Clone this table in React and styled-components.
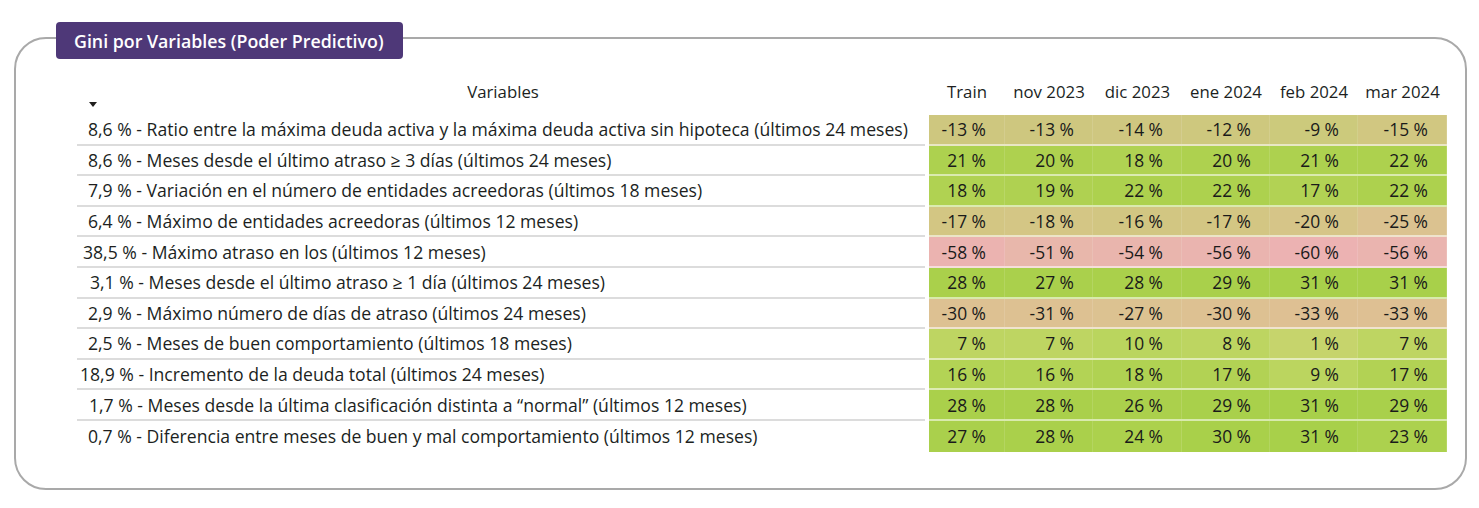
import React from 'react';
import styled, { createGlobalStyle } from 'styled-components';

const GlobalStyle = createGlobalStyle`
    html, body {
        margin: 0;
        padding: 0;
        background: #ffffff;
    }
    body {
        font-family: "Open Sans", "Noto Sans", sans-serif;
        color: #201f1e;
    }
`;

const Page = styled.div`
    width: 1479px;
    height: 508px;
    padding: 37px 12px 0 14px;
    box-sizing: border-box;
`;

const Frame = styled.div`
    position: relative;
    height: 453px;
    border: 2px solid #a9a9a9;
    border-radius: 32px;
    box-sizing: border-box;
    padding: 36px 0 0 61px;
`;

const Badge = styled.div`
    position: absolute;
    top: -17px;
    left: 40px;
    height: 37px;
    padding: 0 19px 0 18px;
    display: flex;
    align-items: center;
    background: #4e3878;
    border-radius: 4px;
    color: #ffffff;
    font-weight: 600;
    font-size: 17.8px;
`;

const Grid = styled.div`
    display: grid;
    grid-template-columns: 852px 76px 88px 89px 88px 88px 89px;
    grid-template-rows: 40px;
    grid-auto-rows: 30.6px;
    font-size: 17.4px;
`;

const HeadCell = styled.div`
    display: flex;
    align-items: flex-start;
    justify-content: center;
    position: relative;
    padding-top: 5px;
    box-sizing: border-box;
    font-size: 16.8px;
`;

const SortArrow = styled.span`
    position: absolute;
    left: 12px;
    top: 27px;
    width: 0;
    height: 0;
    border-left: 4px solid transparent;
    border-right: 4px solid transparent;
    border-top: 5px solid #201f1e;
`;

const Label = styled.div`
    margin-right: 4px;
    display: flex;
    align-items: center;
    padding-left: ${p => p.$indent}px;
    white-space: nowrap;
    border-bottom: ${p => (p.$last ? 'none' : '2px solid #dcdcdc')};
    box-sizing: border-box;
    font-size: 17.6px;
`;

const Value = styled.div`
    display: flex;
    align-items: center;
    justify-content: flex-end;
    padding-right: 19px;
    background: ${p => p.$bg};
    border-bottom: ${p => (p.$last ? 'none' : '2px solid rgba(255,255,255,0.55)')};
    box-shadow: inset -1px 0 0 rgba(255, 255, 255, 0.12);
    box-sizing: border-box;
    color: #1a1a1a;
`;

const anchors = [
    [-60, [236, 178, 178]],
    [-51, [232, 183, 171]],
    [-33, [222, 192, 147]],
    [-25, [219, 194, 144]],
    [-17, [211, 198, 131]],
    [-13, [206, 199, 127]],
    [-9, [204, 202, 124]],
    [1, [198, 212, 108]],
    [7, [190, 213, 98]],
    [10, [186, 213, 94]],
    [20, [174, 209, 79]],
    [31, [168, 208, 74]],
];

function colorFor(v) {
    if (v <= anchors[0][0]) return `rgb(${anchors[0][1].join(',')})`;
    for (let i = 1; i < anchors.length; i++) {
        const [v1, c1] = anchors[i];
        const [v0, c0] = anchors[i - 1];
        if (v <= v1) {
            const t = (v - v0) / (v1 - v0);
            const c = c0.map((x, k) => Math.round(x + (c1[k] - x) * t));
            return `rgb(${c.join(',')})`;
        }
    }
    return `rgb(${anchors[anchors.length - 1][1].join(',')})`;
}

const columns = ['Train', 'nov 2023', 'dic 2023', 'ene 2024', 'feb 2024', 'mar 2024'];

const rows = [
    { label: '8,6 % - Ratio entre la máxima deuda activa y la máxima deuda activa sin hipoteca (últimos 24 meses)', indent: 11, values: [-13, -13, -14, -12, -9, -15] },
    { label: '8,6 % - Meses desde el último atraso ≥ 3 días (últimos 24 meses)', indent: 11, values: [21, 20, 18, 20, 21, 22] },
    { label: '7,9 % - Variación en el número de entidades acreedoras (últimos 18 meses)', indent: 11, values: [18, 19, 22, 22, 17, 22] },
    { label: '6,4 % - Máximo de entidades acreedoras (últimos 12 meses)', indent: 11, values: [-17, -18, -16, -17, -20, -25] },
    { label: '38,5 % - Máximo atraso en los (últimos 12 meses)', indent: 6, values: [-58, -51, -54, -56, -60, -56] },
    { label: '3,1 % - Meses desde el último atraso ≥ 1 día (últimos 24 meses)', indent: 13, values: [28, 27, 28, 29, 31, 31] },
    { label: '2,9 % - Máximo número de días de atraso (últimos 24 meses)', indent: 11, values: [-30, -31, -27, -30, -33, -33] },
    { label: '2,5 % - Meses de buen comportamiento (últimos 18 meses)', indent: 11, values: [7, 7, 10, 8, 1, 7] },
    { label: '18,9 % - Incremento de la deuda total (últimos 24 meses)', indent: 3, values: [16, 16, 18, 17, 9, 17] },
    { label: '1,7 % - Meses desde la última clasificación distinta a “normal” (últimos 12 meses)', indent: 12, values: [28, 28, 26, 29, 31, 29] },
    { label: '0,7 % - Diferencia entre meses de buen y mal comportamiento (últimos 12 meses)', indent: 11, values: [27, 28, 24, 30, 31, 23] },
];

export default function App() {
    return (
        <Page>
            <GlobalStyle />
            <Frame>
                <Badge>Gini por Variables (Poder Predictivo)</Badge>
                <Grid>
                    <HeadCell>
                        Variables
                        <SortArrow />
                    </HeadCell>
                    {columns.map(c => <HeadCell key={c}>{c}</HeadCell>)}
                    {rows.map((r, i) => (
                        <React.Fragment key={i}>
                            <Label $indent={r.indent} $last={i === rows.length - 1}>{r.label}</Label>
                            {r.values.map((v, j) => (
                                <Value key={j} $bg={colorFor(v)} $last={i === rows.length - 1}>
                                    {v} %
                                </Value>
                            ))}
                        </React.Fragment>
                    ))}
                </Grid>
            </Frame>
        </Page>
    );
}
